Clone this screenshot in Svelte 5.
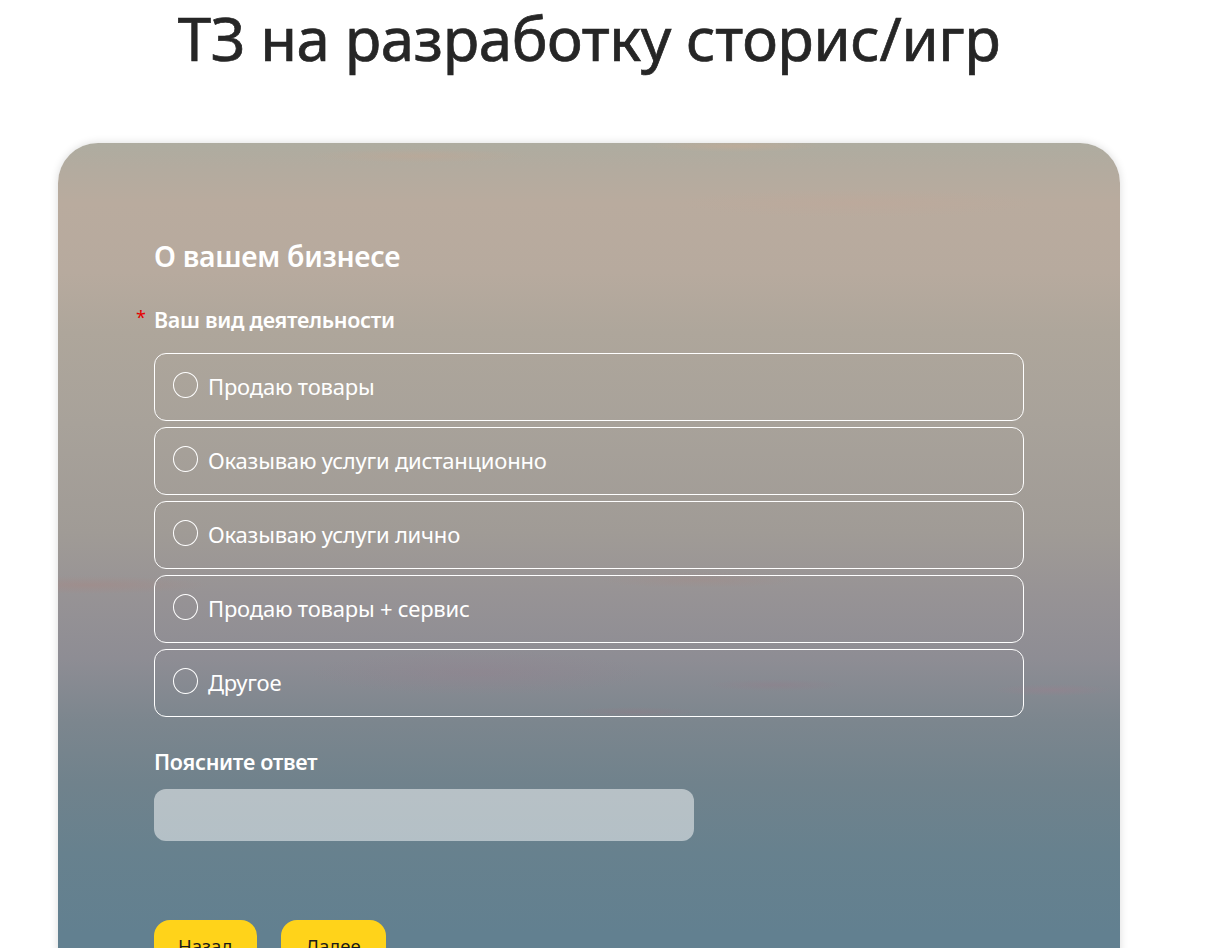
<script>
  let options = [
    'Продаю товары',
    'Оказываю услуги дистанционно',
    'Оказываю услуги лично',
    'Продаю товары + сервис',
    'Другое'
  ];
  let selected = null;
  let explanation = '';
</script>

<div class="page">
  <h1>ТЗ на разработку сторис/игр</h1>

  <form class="card" on:submit|preventDefault>
    <h2>О вашем бизнесе</h2>

    <div class="question required">
      <div class="label">Ваш вид деятельности</div>
      <div class="options">
        {#each options as option}
          <label class="option">
            <input type="radio" name="activity" value={option} bind:group={selected} />
            <span>{option}</span>
          </label>
        {/each}
      </div>
    </div>

    <div class="question">
      <label class="label short" for="explain">Поясните ответ</label>
      <input id="explain" class="text-input" type="text" bind:value={explanation} />
    </div>

    <div class="buttons">
      <button type="button" class="btn back">Назад</button>
      <button type="submit" class="btn next">Далее</button>
    </div>
  </form>
</div>

<style>
  :global(body) {
    margin: 0;
    background: #fff;
    overflow: hidden;
  }

  .page {
    padding: 0 92px 40px 58px;
    font-family: "Noto Sans", "Open Sans", sans-serif;
  }

  h1 {
    margin: 0;
    padding-top: 3px;
    height: 143px;
    box-sizing: border-box;
    font-size: 60px;
    line-height: 70px;
    font-weight: 400;
    text-align: center;
    color: #262626;
    -webkit-text-stroke: 0.7px #262626;
    letter-spacing: -0.4px;
  }

  .card {
    padding: 96px 96px 64px;
    border-radius: 40px;
    color: #fff;
    box-shadow: 0 0 8px rgba(0, 0, 0, 0.14);
    background:
      radial-gradient(ellipse 110px 7px at 360px 13px, rgba(195, 165, 145, 0.4), transparent),
      radial-gradient(ellipse 90px 6px at 677px 3px, rgba(205, 170, 145, 0.45), transparent),
      radial-gradient(ellipse 180px 14px at 800px 60px, rgba(195, 165, 150, 0.3), transparent),
      radial-gradient(ellipse 120px 9px at 30px 442px, rgba(170, 130, 125, 0.35), transparent),
      radial-gradient(ellipse 100px 8px at 642px 437px, rgba(165, 135, 130, 0.3), transparent),
      radial-gradient(ellipse 170px 22px at 420px 530px, rgba(150, 125, 140, 0.3), transparent),
      radial-gradient(ellipse 70px 6px at 718px 542px, rgba(150, 120, 135, 0.3), transparent),
      radial-gradient(ellipse 60px 6px at 995px 547px, rgba(160, 125, 140, 0.35), transparent),
      radial-gradient(ellipse 70px 5px at 576px 569px, rgba(150, 120, 130, 0.35), transparent),
      linear-gradient(180deg,
        #aeaca0 0px,
        #b3ab9f 25px,
        #b9ab9e 60px,
        #b7aa9e 130px,
        #aea69b 190px,
        #a8a29a 280px,
        #a09b96 390px,
        #979395 450px,
        #8e8d94 515px,
        #7c868e 578px,
        #70828c 640px,
        #67818e 710px,
        #628090 790px);
  }

  h2 {
    margin: 0 0 33px;
    font-size: 28.4px;
    line-height: 34px;
    font-weight: 600;
    letter-spacing: -0.3px;
  }

  .question {
    margin-bottom: 31px;
  }

  .required {
    position: relative;
  }

  .required::before {
    content: "*";
    position: absolute;
    left: -18px;
    top: -3px;
    font-size: 18px;
    line-height: 28px;
    color: #e60000;
  }

  .label {
    display: block;
    font-size: 21.5px;
    line-height: 28px;
    font-weight: 600;
    letter-spacing: -0.3px;
    margin-bottom: 19px;
  }

  .label.short {
    margin-bottom: 13px;
  }

  .options {
    display: flex;
    flex-direction: column;
    gap: 6px;
  }

  .option {
    display: flex;
    align-items: center;
    gap: 10px;
    height: 68px;
    box-sizing: border-box;
    padding: 0 18px;
    border: 1px solid #fff;
    border-radius: 12px;
    font-size: 22px;
    letter-spacing: -0.2px;
    cursor: pointer;
  }

  .option span {
    margin-bottom: 2px;
  }

  .option input {
    appearance: none;
    flex: none;
    width: 25px;
    height: 26px;
    margin: -4px 0 0;
    border: 1px solid #fff;
    border-radius: 50%;
  }

  .text-input {
    display: block;
    width: 540px;
    height: 52px;
    box-sizing: border-box;
    border: 0;
    border-radius: 12px;
    background: rgba(255, 255, 255, 0.5);
    outline: none;
  }

  .buttons {
    display: flex;
    gap: 24px;
    margin-top: 79px;
  }

  .btn {
    height: 50px;
    padding: 0 24px;
    border: 0;
    border-radius: 16px;
    background: #ffd31a;
    color: #1a1a1a;
    font-family: inherit;
    font-size: 18.5px;
    cursor: pointer;
  }

  .btn.next {
    padding: 0 25px;
  }
</style>
